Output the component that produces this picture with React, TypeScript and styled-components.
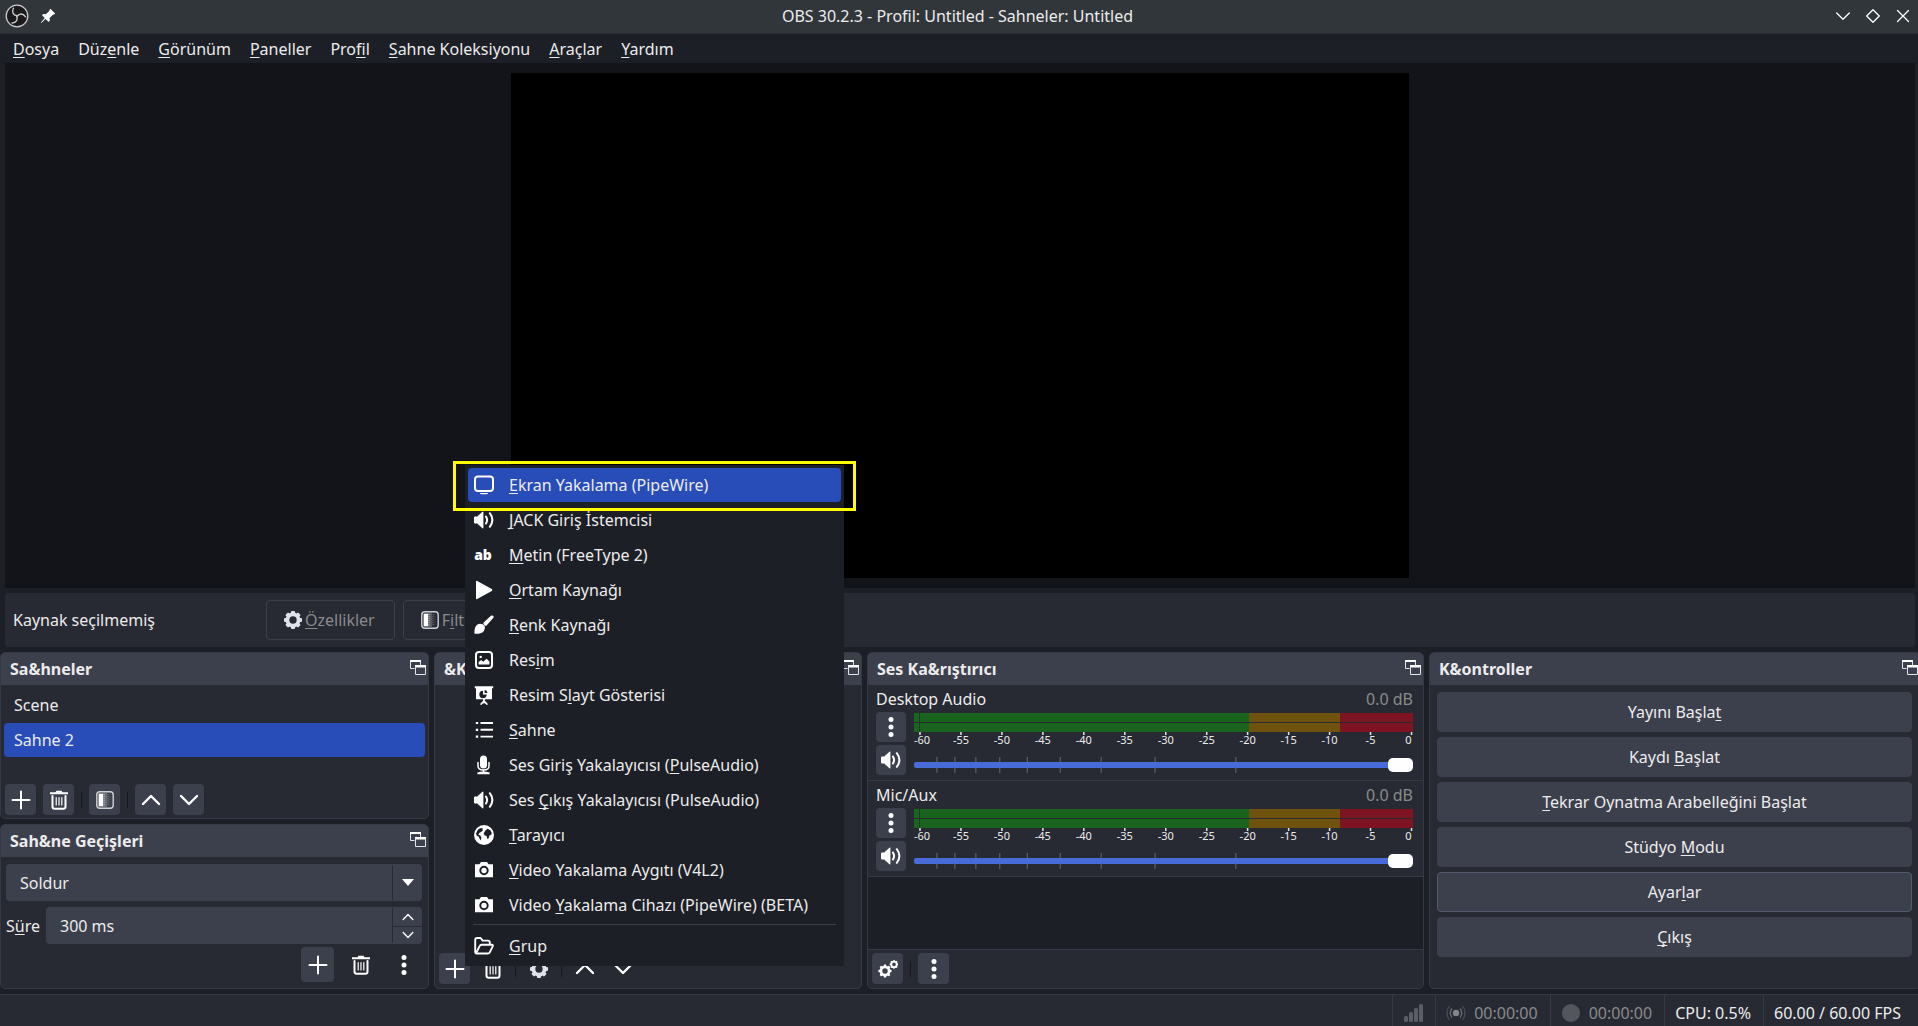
import React from "react";
import styled, { createGlobalStyle } from "styled-components";

const c = {
  title: "#31363b",
  window: "#1d1f26",
  preview: "#131419",
  base: "#272a33",
  button: "#3c404d",
  line: "#353945",
  text: "#ececec",
  muted: "#8a8a8b",
  primary: "#284cb8",
  slider: "#476bd7",
};

const Global = createGlobalStyle`
  *, *::before, *::after { box-sizing: border-box; }
  body { margin: 0; background: ${c.window}; }
  body, button, input, select {
    font-family: "Noto Sans", "Open Sans", sans-serif;
    font-size: 16px;
    line-height: 22px;
    color: ${c.text};
  }
  button, input, select { margin: 0; padding: 0; border: 0; background: none; outline: 0; }
  ul { margin: 0; padding: 0; list-style: none; }
  svg { display: block; flex: none; }
  u { text-underline-offset: 2px; text-decoration-thickness: 1px; text-decoration-skip-ink: none; }
`;

/* Mnemonic text: the letter after "_" is underlined. */
const Mn = ({ t }: { t: string }) => {
  const i = t.indexOf("_");
  if (i < 0) return <>{t}</>;
  return (
    <span>
      {t.slice(0, i)}
      <u>{t[i + 1]}</u>
      {t.slice(i + 2)}
    </span>
  );
};

/* ---------- icons ---------- */

const Svg = styled.svg.attrs<{ viewBox?: string }>((p) => ({
  viewBox: p.viewBox ?? "0 0 20 20",
  "aria-hidden": true,
}))<{ $size?: number }>`
  width: ${(p) => p.$size ?? 20}px;
  height: ${(p) => p.$size ?? 20}px;
  fill: #fefefe;
`;
const line = { fill: "none", stroke: "#fefefe", strokeLinecap: "round", strokeLinejoin: "round" } as const;

const Teeth = ({ x, y, r, w }: { x: number; y: number; r: number; w: number }) => (
  <g>
    <circle cx={x} cy={y} r={r * 0.62} fill="none" stroke="currentColor" strokeWidth={r * 0.42} />
    {[0, 45, 90, 135, 180, 225, 270, 315].map((a) => (
      <rect
        key={a}
        x={x - w / 2}
        y={y - r}
        width={w}
        height={r * 0.35}
        rx={w * 0.25}
        fill="currentColor"
        transform={`rotate(${a} ${x} ${y})`}
      />
    ))}
  </g>
);
const GearIcon = () => <Svg color="#dfe2ea"><Teeth x={10} y={10} r={9} w={4.2} /></Svg>;
const GearsIcon = () => (
  <Svg color="#fefefe">
    <Teeth x={7} y={12} r={6.6} w={2.4} />
    <Teeth x={16} y={5.4} r={4.4} w={1.6} />
  </Svg>
);
const PlusIcon = () => <Svg><path {...line} strokeWidth={2} d="M10 1.5v17M1.5 10h17" /></Svg>;
const TrashIcon = () => (
  <Svg>
    <path d="M1 2.2h5.5L7.500 .8h5l1 1.400H19v2H1z" />
    <path {...line} strokeWidth={2} d="M3.500 6v10.500q0 2.200 2.200 2.200h8.600q2.200 0 2.200-2.200V6" />
    <path {...line} strokeWidth={1.200} d="M7.200 7.500v7.500M10 7.500v7.500M12.800 7.500v7.500" />
  </Svg>
);
const FilterIcon = () => (
  <Svg>
    <rect x="1.8" y="1.8" width="16.4" height="16.4" rx="3" fill="none" stroke="#cfd1d6" strokeWidth="1.4" />
    <rect x="3.6" y="3.6" width="4.4" height="12.8" />
    <path stroke="#fefefe" strokeWidth="1.6" strokeDasharray="1.2 .8" d="M9 3.6v12.8" opacity=".8" />
    <path stroke="#fefefe" strokeWidth="1.6" strokeDasharray="1 1" d="M11 3.6v12.8" opacity=".6" />
    <path stroke="#fefefe" strokeWidth="1.4" strokeDasharray="1 1" d="M13 4.2v12" opacity=".35" />
    <path stroke="#fefefe" strokeWidth="1.2" strokeDasharray=".8 1.6" d="M15 4.2v12" opacity=".2" />
  </Svg>
);
const UpIcon = ({ size }: { size?: number }) => <Svg $size={size}><path {...line} strokeWidth={2.4} d="M2 14l8-8 8 8" /></Svg>;
const DownIcon = ({ size }: { size?: number }) => <Svg $size={size}><path {...line} strokeWidth={2.4} d="M2 6l8 8 8-8" /></Svg>;
const DotsIcon = () => (
  <Svg><circle cx="10" cy="2.6" r="2.5" /><circle cx="10" cy="10" r="2.5" /><circle cx="10" cy="17.4" r="2.5" /></Svg>
);
const SpeakerIcon = () => (
  <Svg>
    <path d="M0 7.500q0-1 1-1h2.200L8.400 1.800q1-.8 1 .6v15.200q0 1.400-1 .6L3.200 13.500H1q-1 0-1-1z" />
    <path {...line} strokeWidth={2} d="M12 6.600q2.200 3.400 0 6.800M15.800 3.200q5.200 6.800 0 13.600" />
  </Svg>
);
const FloatIcon = () => (
  <Svg $size={16} viewBox="0 0 16 16">
    <path fill="none" stroke="#e4e5e8" d="M4.500 9.500h-4V1.500h10V6" />
    <path d="M0 1h11v2H0zM5 6h11v2.500H5z" />
    <path fill="none" stroke="#e4e5e8" d="M5.500 7v8.500h10V7" />
  </Svg>
);
const ScreenIcon = () => (
  <Svg><rect x="1" y="1.600" width="18" height="14.400" rx="3" {...line} strokeWidth={2} /><path d="M6 18h8v.8q-4 1-8 0z" /></Svg>
);
const TextIcon = () => (
  <Svg><text x="9" y="15" textAnchor="middle" fontFamily="Noto Sans" fontWeight="900" fontSize="14">ab</text></Svg>
);
const PlayIcon = () => <Svg><path d="M2 1.600q0-1.200 1.200-.6l14.600 8q1.200 1 0 2l-14.600 8q-1.200.600-1.200-.6z" /></Svg>;
const BrushIcon = () => (
  <Svg>
    <path d="M17.200.600q1.400-.6 2.200.4.600 1-.2 2l-6.400 7.200q-1 1.200-2.200.2l-.9-.9q-1-1.100.2-2.200z" />
    <path d="M6 8.800q3 0 4.600 2.200 1.200 2.400-.6 5Q8 19 1 18.800q-.8 0-.6-1.400C.600 12.500 2.200 9.200 6 8.800z" />
  </Svg>
);
const ImageIcon = () => (
  <Svg>
    <rect x="2" y="2" width="16" height="16" rx="3" {...line} strokeWidth={2} />
    <path d="M4.600 14.600v-2.500l2.600-2 2 1.600 3.400-3 2.800 2.900v3z" />
    <circle cx="6.700" cy="6.900" r="1.200" />
  </Svg>
);
const SlidesIcon = () => (
  <Svg>
    <path d="M.8 1.200h18.400v2h-1.200v11H2v-11H.8z" />
    <path fill={c.window} d="M9 5.800v3.700h3.700A3.700 3.700 0 1 1 9 5.800zM10.600 5q2.500.2 2.900 2.900h-2.900z" />
    <path {...line} strokeWidth={1.800} d="M10 14v3.500M10 16l-2.800 3M10 16l2.800 3" />
  </Svg>
);
const ListIcon = () => (
  <Svg>
    <path stroke="#fefefe" strokeWidth={1.900} d="M6.500 3h12.500M6.500 9.800h12.500M6.500 16.600h12.500" />
    <path stroke="#fefefe" strokeWidth={2.200} d="M1.800 3h2.400M1.800 9.800h2.400M1.800 16.600h2.400" />
  </Svg>
);
const MicIcon = () => (
  <Svg>
    <rect x="6" y=".6" width="7" height="12.800" rx="3.500" />
    <path {...line} strokeWidth={1.500} d="M4 7.500v3.500q0 4 5.500 4t5.500-4V7.500M9.500 15v3" />
    <path d="M3.400 17.400q6-1.600 12.200 0v1.900H3.400z" />
  </Svg>
);
const GlobeIcon = () => (
  <Svg>
    <circle cx="10" cy="10" r="10" />
    <path fill={c.window} d="M6.800 3 4 4.600 2 8.600l.8 2.200 1.800.6 1 2.400 1.200 1.800.6-2.800-1-2.200-2-.8.800-1.800 1.800-1 1.600-1.200L8.800 3.400zM11.400 5.600l2.200-1.800 2.800 1.400 1.400 2.800-.6 1.800-1.800.6-.8 3-1.400.4-.6-2.800-1.800-.4-1.200-2z" />
  </Svg>
);
const CameraIcon = () => (
  <Svg>
    <path d="M1 4.200h4.400L7 2h6l1.600 2.200H19v13H1z" />
    <circle cx="10" cy="10.500" r="3.700" fill="#fefefe" stroke={c.window} strokeWidth="2" />
  </Svg>
);
const FolderIcon = () => (
  <Svg>
    <path {...line} strokeWidth={1.900} d="M1.200 16V4q0-2 2-2h3.400l2 2.600H14q1.800 0 1.800 2v1.800M2 17.300l3.600-7.200q.6-1.400 2.200-1.400h10q1.600 0 .9 1.600l-2.800 5.800q-.7 1.400-2.200 1.400H2.700q-1.500 0-1.500-1.700" />
  </Svg>
);
const ObsIcon = () => (
  <Svg $size={24} viewBox="0 0 24 24">
    <circle cx="12" cy="12" r="10.800" fill="#1b191b" stroke="#c9cacb" strokeWidth="1.300" />
    <g fill="none" stroke="#c9cacb" strokeWidth="1.400" strokeLinecap="round">
      {[0, 120, 240].map((a) => (
        <path key={a} d="M8.400 4.200C6.400 8.200 8.400 11.400 12.400 11.800" transform={`rotate(${a} 12 12)`} />
      ))}
    </g>
  </Svg>
);
const PinIcon = () => (
  <Svg $size={16} viewBox="0 0 16 16">
    <path d="M10.400.8l4.800 4.800-1.200 1-.8-.1-3.600 3.600.3 2.500-1.300 1.300-3-3L1.200 15 .8 14.600 4.800 10l-2.800-2.800L3.300 6l2.500.3L9.500 2.800 9.400 2z" />
  </Svg>
);
const SignalIcon = () => (
  <Svg>
    {[0, 1, 2, 3].map((i) => (
      <rect key={i} x={1 + i * 5} y={13 - i * 4} width="4" height={6 + i * 4} rx="1.500" fill="#5a5d65" />
    ))}
  </Svg>
);
const StreamIcon = () => (
  <Svg>
    <circle cx="10" cy="10" r="3.200" fill="#85868a" />
    <path fill="none" stroke="#6b6d73" strokeWidth="1.300" d="M6 5.500q-3.400 4.500 0 9M14 5.500q3.400 4.500 0 9" />
    <path fill="none" stroke="#4a4d56" strokeWidth="1.300" d="M3.400 3q-4.800 7 0 14M16.600 3q4.800 7 0 14" />
  </Svg>
);
const RecordIcon = () => <Svg><circle cx="10" cy="10" r="9" fill="#54565e" /></Svg>;

/* ---------- frame ---------- */

const Window = styled.div`
  display: flex;
  flex-direction: column;
  height: 100vh;
  min-height: 760px;
  overflow: hidden;
  background: ${c.window};
`;
const TitleBar = styled.header`
  display: grid;
  grid-template-columns: 1fr auto 1fr;
  align-items: center;
  height: 34px;
  padding: 0 8px 1px 5px;
  background: ${c.title};
  border-bottom: 1px solid #2a2e34;
`;
const TitleSide = styled.div<{ $end?: boolean }>`
  display: flex;
  align-items: center;
  gap: ${(p) => (p.$end ? 16 : 11)}px;
  justify-content: ${(p) => (p.$end ? "flex-end" : "flex-start")};
`;
const Title = styled.h1`
  margin: 0;
  font-size: 16px;
  font-weight: 400;
`;
const BareButton = styled.button`
  display: flex;
  align-items: center;
  justify-content: center;
`;
const MenuBar = styled.nav`
  display: flex;
  gap: 19px;
  height: 29px;
  padding: 0 13px;
  align-items: center;
`;
const Preview = styled.main`
  flex: 1;
  min-height: 0;
  display: flex;
  justify-content: center;
  margin: 0 3px 0 5px;
  padding: 10px;
  background: ${c.preview};
`;
const Canvas = styled.div`
  aspect-ratio: 16 / 9;
  background: #000;
`;
const ContextBar = styled.section`
  display: flex;
  align-items: center;
  gap: 8px;
  height: 54px;
  margin: 5px 3px 5px 5px;
  padding: 0 8px;
  border-radius: 4px;
  background: ${c.base};
`;
const ContextLabel = styled.span`
  width: 245px;
`;
const OutlineButton = styled.button`
  display: flex;
  align-items: center;
  gap: 2px;
  height: 40px;
  padding: 0 19px 0 16px;
  border: 1px solid ${c.button};
  border-radius: 4px;
  color: ${c.muted};
`;

/* ---------- docks ---------- */

/* The rightmost dock runs slightly past the window edge. */
const Docks = styled.div`
  display: grid;
  grid-template-columns: 429fr 428fr 557fr 492fr;
  gap: 5px;
  margin-right: -3px;
`;
const Stack = styled.div`
  display: flex;
  flex-direction: column;
  gap: 5px;
`;
const Dock = styled.section<{ $grow?: boolean }>`
  position: relative;
  display: flex;
  flex-direction: column;
  flex: ${(p) => (p.$grow ? 1 : "none")};
  border: 1px solid ${c.line};
  border-radius: 5px;
  background: ${c.base};
`;
const DockHeader = styled.header`
  display: flex;
  align-items: center;
  justify-content: space-between;
  height: 32px;
  padding: 0 2px 1px 9px;
  border-radius: 4px 4px 0 0;
  background: ${c.button};
`;
const DockTitle = styled.h2`
  margin: 0;
  font-size: 16px;
  font-weight: 700;
  line-height: 22px;
`;
const FloatButton = styled(BareButton)`
  padding-bottom: 3px;
`;
const Head = ({ t }: { t: string }) => (
  <DockHeader>
    <DockTitle>{t}</DockTitle>
    <FloatButton aria-label="Float"><FloatIcon /></FloatButton>
  </DockHeader>
);
const SceneList = styled.ul`
  flex: 1;
  padding: 3px;
`;
const SceneRow = styled.button<{ $on?: boolean }>`
  display: block;
  width: 100%;
  height: 34px;
  margin-bottom: 1px;
  padding: 0 10px;
  border-radius: 4px;
  text-align: left;
  background: ${(p) => (p.$on ? c.primary : "transparent")};
`;
const ToolRow = styled.div<{ $line?: boolean; $low?: boolean; $end?: boolean }>`
  display: flex;
  align-items: center;
  gap: ${(p) => (p.$end ? 10 : 7)}px;
  justify-content: ${(p) => (p.$end ? "flex-end" : "flex-start")};
  padding: ${(p) => (p.$end ? "3px 8px 6px" : p.$low ? "3px 4px 4px" : "3px 4px")};
  border-top: ${(p) => (p.$line ? `1px solid ${c.line}` : 0)};
`;
const Tool = styled.button<{ $flat?: boolean; $big?: boolean }>`
  display: flex;
  align-items: center;
  justify-content: center;
  width: ${(p) => (p.$big ? 33 : 31)}px;
  height: ${(p) => (p.$big ? 35 : 31)}px;
  border-radius: 4px;
  background: ${(p) => (p.$flat ? "transparent" : c.button)};
`;
const Sep = styled.span`
  width: 1px;
  height: 16px;
  background: #16181d;
`;
const Fields = styled.div`
  display: flex;
  flex-direction: column;
  gap: 6px;
  padding: 7px 6px 0 5px;
`;
const FieldRow = styled.div`
  display: flex;
  align-items: center;
  gap: 6px;
`;
const Field = styled.div`
  display: grid;
  grid-template-columns: 1fr 30px;
  flex: 1;
  height: 37px;
  border-radius: 4px;
  background: ${c.button};
`;
const Select = styled.select`
  grid-area: 1 / 1 / 2 / 3;
  padding: 0 14px;
  appearance: none;
`;
const Arrow = styled.span`
  grid-area: 1 / 2;
  display: flex;
  align-items: center;
  justify-content: center;
  margin: 1px 0;
  border-left: 1px solid ${c.base};
  pointer-events: none;
`;
const NumberBox = styled.input`
  min-width: 0;
  padding: 0 14px;
`;
const Steps = styled.div`
  display: grid;
  grid-template-rows: 1fr 1fr;
  margin: 1px 0;
  border-left: 1px solid ${c.base};
`;
const Step = styled(BareButton)`
  & + & { border-top: 1px solid ${c.base}; }
`;
const Empty = styled.div`
  flex: 1;
`;

/* ---------- sources menu ---------- */

const Popup = styled.div`
  position: absolute;
  left: 30px;
  bottom: 22px;
  z-index: 2;
  width: 379px;
  padding: 3px 3px 2px;
  background: ${c.window};
`;
const PopupItem = styled.button<{ $on?: boolean }>`
  display: flex;
  align-items: center;
  gap: 15px;
  width: 100%;
  height: 34px;
  margin-bottom: 1px;
  padding: 0 6px;
  border-radius: 4px;
  text-align: left;
  background: ${(p) => (p.$on ? c.primary : "transparent")};
`;
const PopupRule = styled.hr`
  height: 1px;
  margin: 2px 5px 4px;
  border: 0;
  background: ${c.button};
`;
const Marker = styled.div`
  position: absolute;
  top: -4px;
  left: -12px;
  right: -12px;
  height: 50px;
  border: 3px solid #ffff00;
  pointer-events: none;
`;

/* ---------- mixer ---------- */

const Channel = styled.div`
  padding: 3px 10px 0 8px;
  border-bottom: 1px solid ${c.line};
`;
const ChannelHead = styled.div`
  display: flex;
  justify-content: space-between;
  margin-bottom: 1px;
`;
const Level = styled.span`
  color: ${c.muted};
`;
const ChannelBody = styled.div`
  display: grid;
  grid-template-columns: 30px 1fr;
  column-gap: 8px;
`;
const ChannelButtons = styled.div`
  display: flex;
  flex-direction: column;
  gap: 3px;
  padding-top: 1px;
`;
const ChannelButton = styled(Tool)`
  width: 30px;
  height: 30px;
`;
const Meter = styled.div`
  display: flex;
  flex-direction: column;
  gap: 1px;
  padding-top: 2px;
`;
const Bar = styled.div`
  height: 9px;
  background: linear-gradient(
    to right,
    #19651f 0 1%, #1f3a25 1% 1.300%, #19651f 1.300% 67.100%,
    #6f520d 67.100% 85.300%, #7e1322 85.300%
  );
`;
const Scale = styled.svg`
  width: 100%;
  height: 18px;
  overflow: visible;
  font-size: 11px;
  fill: ${c.text};
`;
const SliderBox = styled.div`
  display: grid;
  height: 30px;
  align-items: center;
`;
const Notches = styled.svg`
  grid-area: 1 / 1;
  width: 100%;
  height: 16px;
`;
const Slider = styled.input`
  grid-area: 1 / 1;
  width: 100%;
  height: 14px;
  appearance: none;
  &::-webkit-slider-runnable-track {
    height: 6px;
    border-radius: 2px;
    background: ${c.slider};
  }
  &::-webkit-slider-thumb {
    appearance: none;
    width: 25px;
    height: 14px;
    margin-top: -4px;
    border-radius: 5px;
    background: #fefefe;
  }
`;
const MixerVoid = styled.div`
  flex: 1;
  background: ${c.window};
`;
const marks = [-60, -55, -50, -45, -40, -35, -30, -25, -20, -15, -10, -5, 0];
const notches = [4.600, 8.200, 12.400, 17.200, 22.700, 29.300, 37.500, 48.300, 64.500];

const Mixer = ({ name }: { name: string }) => (
  <Channel>
    <ChannelHead>
      <span>{name}</span>
      <Level>0.0 dB</Level>
    </ChannelHead>
    <ChannelBody>
      <ChannelButtons>
        <ChannelButton aria-label={`${name} menu`}><DotsIcon /></ChannelButton>
        <ChannelButton aria-label={`${name} mute`}><SpeakerIcon /></ChannelButton>
      </ChannelButtons>
      <div>
        <Meter><Bar /><Bar /></Meter>
        <Scale aria-hidden="true">
          {marks.map((m, i) => {
            const x = 1.200 + (i * 98.500) / 12;
            const first = i === 0;
            const last = i === marks.length - 1;
            return (
              <g key={m}>
                <line x1={`${x}%`} x2={`${x}%`} y1="0" y2="3" stroke="#e4e4e4" strokeWidth="1.500" />
                <text x={first ? "0%" : last ? "99.700%" : `${x}%`} y="12" textAnchor={first ? "start" : last ? "end" : "middle"}>
                  {m}
                </text>
              </g>
            );
          })}
        </Scale>
        <SliderBox>
          <Notches aria-hidden="true">
            {notches.map((n) => (
              <line key={n} x1={`${n}%`} x2={`${n}%`} y1="0" y2="16" stroke="#666a78" />
            ))}
          </Notches>
          <Slider type="range" min={0} max={100} defaultValue={100} aria-label={name} />
        </SliderBox>
      </div>
    </ChannelBody>
  </Channel>
);

/* ---------- controls and status ---------- */

const Controls = styled.div`
  display: flex;
  flex-direction: column;
  gap: 5px;
  padding: 7px 8px 31px 7px;
`;
const ControlButton = styled.button<{ $hot?: boolean }>`
  height: 40px;
  border: 1px solid ${(p) => (p.$hot ? "#525a6e" : c.button)};
  border-radius: 4px;
  background: ${c.button};
`;
const StatusBar = styled.footer`
  display: flex;
  justify-content: flex-end;
  height: 32px;
  margin-top: 5px;
  border-top: 1px solid ${c.line};
  background: ${c.base};
`;
const Status = styled.div<{ $dim?: boolean; $last?: boolean }>`
  display: flex;
  align-items: center;
  gap: 8px;
  padding: 4px ${(p) => (p.$last ? 17 : 12)}px 0 10px;
  border-left: 1px solid ${c.line};
  color: ${(p) => (p.$dim ? c.muted : c.text)};
`;

const menus = ["_Dosya", "Düz_enle", "_Görünüm", "_Paneller", "Pro_fil", "_Sahne Koleksiyonu", "_Araçlar", "_Yardım"];
const sources: [React.FC, string][] = [
  [ScreenIcon, "_Ekran Yakalama (PipeWire)"],
  [SpeakerIcon, "_JACK Giriş İstemcisi"],
  [TextIcon, "_Metin (FreeType 2)"],
  [PlayIcon, "_Ortam Kaynağı"],
  [BrushIcon, "_Renk Kaynağı"],
  [ImageIcon, "Res_im"],
  [SlidesIcon, "Resim S_layt Gösterisi"],
  [ListIcon, "_Sahne"],
  [MicIcon, "Ses Giriş Yakalayıcısı (_PulseAudio)"],
  [SpeakerIcon, "Ses _Çıkış Yakalayıcısı (PulseAudio)"],
  [GlobeIcon, "_Tarayıcı"],
  [CameraIcon, "_Video Yakalama Aygıtı (V4L2)"],
  [CameraIcon, "Video _Yakalama Cihazı (PipeWire) (BETA)"],
];
const controls = ["Yayını Başla_t", "Kaydı _Başlat", "_Tekrar Oynatma Arabelleğini Başlat", "Stüdyo _Modu", "Ayar_lar", "_Çıkış"];

export default function App() {
  return (
    <Window>
      <Global />
      <TitleBar>
        <TitleSide>
          <ObsIcon />
          <BareButton aria-label="Pin"><PinIcon /></BareButton>
        </TitleSide>
        <Title>OBS 30.2.3 - Profil: Untitled - Sahneler: Untitled</Title>
        <TitleSide $end>
          <BareButton aria-label="Minimize">
            <Svg $size={14} viewBox="0 0 14 14"><path {...line} strokeWidth={1.300} d="M.7 4l6.300 6.300L13.300 4" /></Svg>
          </BareButton>
          <BareButton aria-label="Restore">
            <Svg $size={14} viewBox="0 0 14 14"><path {...line} strokeWidth={1.300} d="M7 .7L13.300 7 7 13.300.7 7z" /></Svg>
          </BareButton>
          <BareButton aria-label="Close">
            <Svg $size={14} viewBox="0 0 14 14"><path {...line} strokeWidth={1.300} d="M1.500 1.500l11 11M12.500 1.500l-11 11" /></Svg>
          </BareButton>
        </TitleSide>
      </TitleBar>
      <MenuBar>
        {menus.map((m) => <BareButton key={m}><Mn t={m} /></BareButton>)}
      </MenuBar>
      <Preview><Canvas /></Preview>
      <ContextBar>
        <ContextLabel>Kaynak seçilmemiş</ContextLabel>
        <OutlineButton><GearIcon /><Mn t="_Özellikler" /></OutlineButton>
        <OutlineButton><FilterIcon /><Mn t="F_iltreler" /></OutlineButton>
      </ContextBar>
      <Docks>
        <Stack>
          <Dock $grow>
            <Head t="Sa&hneler" />
            <SceneList>
              <li><SceneRow>Scene</SceneRow></li>
              <li><SceneRow $on>Sahne 2</SceneRow></li>
            </SceneList>
            <ToolRow>
              <Tool aria-label="Add scene"><PlusIcon /></Tool>
              <Tool aria-label="Remove scene"><TrashIcon /></Tool>
              <Sep />
              <Tool aria-label="Scene filters"><FilterIcon /></Tool>
              <Sep />
              <Tool aria-label="Move up"><UpIcon /></Tool>
              <Tool aria-label="Move down"><DownIcon /></Tool>
            </ToolRow>
          </Dock>
          <Dock>
            <Head t="Sah&ne Geçişleri" />
            <Fields>
              <FieldRow>
                <Field>
                  <Select aria-label="Sahne Geçişleri" defaultValue="Soldur"><option>Soldur</option></Select>
                  <Arrow><svg width="12" height="7" aria-hidden="true"><path fill="#fefefe" d="M0 0h12L6 7z" /></svg></Arrow>
                </Field>
              </FieldRow>
              <FieldRow>
                <label htmlFor="duration"><Mn t="S_üre" /></label>
                <Field>
                  <NumberBox id="duration" defaultValue="300 ms" />
                  <Steps>
                    <Step aria-label="Increase"><UpIcon size={12} /></Step>
                    <Step aria-label="Decrease"><DownIcon size={12} /></Step>
                  </Steps>
                </Field>
              </FieldRow>
            </Fields>
            <ToolRow $end>
              <Tool $big aria-label="Add transition"><PlusIcon /></Tool>
              <Tool $big $flat aria-label="Remove transition"><TrashIcon /></Tool>
              <Tool $big $flat aria-label="Transition menu"><DotsIcon /></Tool>
            </ToolRow>
          </Dock>
        </Stack>
        <Dock>
          <Head t="&Kaynaklar" />
          <Empty />
          <ToolRow $low>
            <Tool aria-label="Add source"><PlusIcon /></Tool>
            <Tool $flat aria-label="Remove source"><TrashIcon /></Tool>
            <Sep />
            <Tool $flat aria-label="Source properties"><GearIcon /></Tool>
            <Sep />
            <Tool $flat aria-label="Source up"><UpIcon /></Tool>
            <Tool $flat aria-label="Source down"><DownIcon /></Tool>
          </ToolRow>
          <Popup>
            {sources.map(([Icon, label], i) => (
              <PopupItem key={label} $on={i === 0}><Icon /><Mn t={label} /></PopupItem>
            ))}
            <PopupRule />
            <PopupItem><FolderIcon /><Mn t="_Grup" /></PopupItem>
            <Marker />
          </Popup>
        </Dock>
        <Dock>
          <Head t="Ses Ka&rıştırıcı" />
          <Mixer name="Desktop Audio" />
          <Mixer name="Mic/Aux" />
          <MixerVoid />
          <ToolRow $line $low>
            <Tool aria-label="Advanced audio"><GearsIcon /></Tool>
            <Sep />
            <Tool aria-label="Mixer menu"><DotsIcon /></Tool>
          </ToolRow>
        </Dock>
        <Dock>
          <Head t="K&ontroller" />
          <Controls>
            {controls.map((t) => <ControlButton key={t} $hot={t === "Ayar_lar"}><Mn t={t} /></ControlButton>)}
          </Controls>
        </Dock>
      </Docks>
      <StatusBar>
        <Status><SignalIcon /></Status>
        <Status $dim><StreamIcon />00:00:00</Status>
        <Status $dim><RecordIcon />00:00:00</Status>
        <Status>CPU: 0.5%</Status>
        <Status $last>60.00 / 60.00 FPS</Status>
      </StatusBar>
    </Window>
  );
}
